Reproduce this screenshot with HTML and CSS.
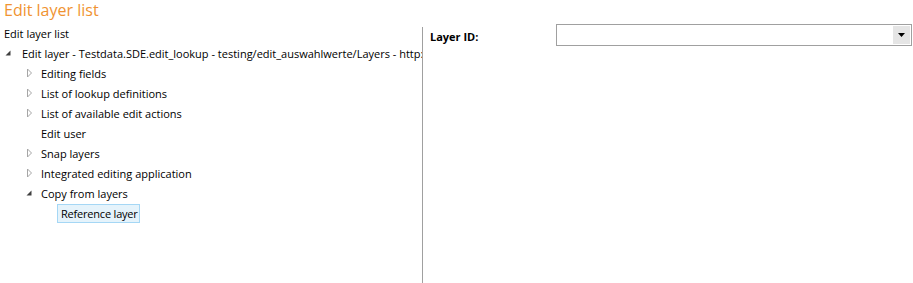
FILE: index.html
```html
<!DOCTYPE html>
<html>
<head>
<meta charset="utf-8">
<link rel="stylesheet" href="styles.css">
</head>
<body>
<div class="title">Edit layer list</div>
<div class="main">
  <div class="left">
    <div class="row caption">Edit layer list</div>
    <div class="row lvl0">
      <span class="exp"><svg width="10" height="10" viewBox="0 0 10 10"><polygon points="7.5,2.5 7.5,7.5 2.5,7.5" fill="#404040"/></svg></span>
      <span class="txt">Edit layer - Testdata.SDE.edit_lookup - testing/edit_auswahlwerte/Layers - http:</span>
    </div>
    <div class="row lvl1"><span class="exp"><svg width="10" height="10" viewBox="0 0 10 10"><polygon points="3.5,1 7.5,5 3.5,9" fill="none" stroke="#a6a6a6" stroke-width="1"/></svg></span><span class="txt">Editing fields</span></div>
    <div class="row lvl1"><span class="exp"><svg width="10" height="10" viewBox="0 0 10 10"><polygon points="3.5,1 7.5,5 3.5,9" fill="none" stroke="#a6a6a6" stroke-width="1"/></svg></span><span class="txt">List of lookup definitions</span></div>
    <div class="row lvl1"><span class="exp"><svg width="10" height="10" viewBox="0 0 10 10"><polygon points="3.5,1 7.5,5 3.5,9" fill="none" stroke="#a6a6a6" stroke-width="1"/></svg></span><span class="txt">List of available edit actions</span></div>
    <div class="row lvl1"><span class="exp"></span><span class="txt">Edit user</span></div>
    <div class="row lvl1"><span class="exp"><svg width="10" height="10" viewBox="0 0 10 10"><polygon points="3.5,1 7.5,5 3.5,9" fill="none" stroke="#a6a6a6" stroke-width="1"/></svg></span><span class="txt">Snap layers</span></div>
    <div class="row lvl1"><span class="exp"><svg width="10" height="10" viewBox="0 0 10 10"><polygon points="3.5,1 7.5,5 3.5,9" fill="none" stroke="#a6a6a6" stroke-width="1"/></svg></span><span class="txt">Integrated editing application</span></div>
    <div class="row lvl1"><span class="exp"><svg width="10" height="10" viewBox="0 0 10 10"><polygon points="7.5,2.5 7.5,7.5 2.5,7.5" fill="#404040"/></svg></span><span class="txt">Copy from layers</span></div>
    <div class="row lvl2"><span class="txt selected">Reference layer</span></div>
  </div>
  <div class="right">
    <div class="field">
      <label class="label">Layer ID:</label>
      <div class="combo">
        <div class="combo-value"></div>
        <div class="combo-btn"><svg width="7" height="4" viewBox="0 0 7 4"><polygon points="0,0 7,0 3.5,4" fill="#000"/></svg></div>
      </div>
    </div>
  </div>
</div>
</body>
</html>
```

FILE: styles.css
```css
html, body {
  margin: 0;
  padding: 0;
  background: #fff;
  width: 913px;
  height: 283px;
  overflow: hidden;
  font-family: "Open Sans", "Noto Sans", sans-serif;
  font-size: 11px;
  color: #000;
}
.title {
  height: 24px;
  padding-left: 4px;
  font-size: 16px;
  line-height: 20px;
  color: #f09331;
}
.main {
  display: flex;
  height: 259px;
}
.left {
  border-right: 1px solid #a0a0a0;
  margin-top: 3px;
  box-sizing: border-box;
  width: 423px;
  overflow: hidden;
  white-space: nowrap;
}
.row {
  height: 20px;
  display: flex;
  align-items: center;
}
.caption {
  padding-left: 4px;
  margin-top: -4px;
}
.exp {
  width: 14px;
  height: 10px;
  display: inline-flex;
  flex: none;
}
.lvl0 { padding-left: 3px; }
.lvl0 .exp { width: 19px; }
.lvl1 { padding-left: 24px; }
.lvl1 .exp { width: 17px; }
.lvl2 { padding-left: 57px; }
.selected {
  background: #e5f3fb;
  border: 1px solid #a5d7f5;
  padding: 1px 1px 1px 3px;
  line-height: 15px;
  letter-spacing: -0.2px;
}
.right {
  flex: 1;
  padding: 0 1px 0 7px;
}
.field {
  display: flex;
  align-items: center;
  height: 22px;
}
.label {
  width: 126px;
  font-weight: bold;
  padding-top: 3px;
}
.combo {
  flex: 1;
  height: 22px;
  box-sizing: border-box;
  border: 1px solid #a0a0a0;
  display: flex;
}
.combo-value { flex: 1; }
.combo-btn {
  width: 17px;
  margin: 1px;
  background: #e5e5e5;
  display: flex;
  align-items: center;
  justify-content: center;
}
```
